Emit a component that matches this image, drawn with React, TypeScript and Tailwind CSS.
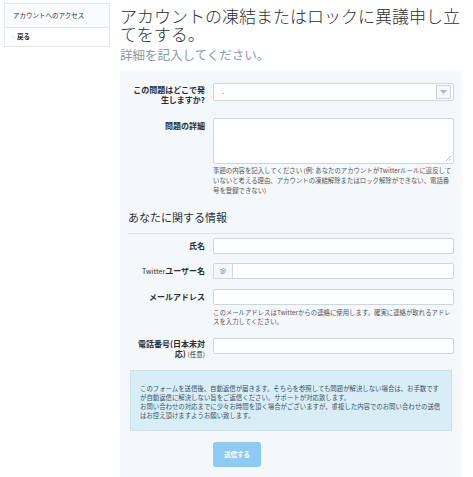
const jp = { fontFamily: '"Noto Sans CJK JP", "Noto Sans", sans-serif' }

function Label({ children }: { children: React.ReactNode }) {
  return (
    <div className="w-[77px] shrink-0 text-right text-[8px] font-bold leading-[10px] text-[#292f33]">
      {children}
    </div>
  )
}

function TextInput() {
  return <div className="h-[16px] flex-1 rounded-[2px] border border-[#ccd6dd] bg-white" />
}

export default function App() {
  return (
    <div className="flex min-h-[477px] bg-white" style={jp}>
      {/* Sidebar */}
      <aside className="ml-[4px] mt-[3px] h-[44px] w-[106px] shrink-0 border border-[#e1e8ed] bg-white">
        <div className="flex h-[24px] items-center border-b border-[#e1e8ed] bg-[#fafbfc] pl-[8px] text-[6.5px] text-[#292f33]">
          アカウントへのアクセス
        </div>
        <div className="flex h-[18px] items-center gap-[3px] pl-[7px] text-[6.5px] font-bold text-[#292f33]">
          <span className="text-[#ccd6dd]">‹</span>
          <span>戻る</span>
        </div>
      </aside>

      {/* Main */}
      <main className="ml-[10px] flex-1">
        <h1 className="mt-[7px] text-[17px] font-light leading-[18px] text-[#292f33]">
          アカウントの凍結またはロックに異議申し立てをする。
        </h1>
        <p className="mt-[4px] text-[12.5px] leading-[16px] text-[#8899a6]">詳細を記入してください。</p>

        <div className="mt-[8px] w-[342px] bg-[#f5f8fa] px-[8px] pb-[20px] pt-[12px]">
          {/* Where */}
          <div className="flex gap-[8px]">
            <div className="pt-[2px]">
              <Label>この問題はどこで発生しますか?</Label>
            </div>
            <div className="flex h-[18px] flex-1 items-center rounded-[2px] border border-[#ccd6dd] bg-white pl-[8px] pr-[2px]">
              <span className="flex-1 text-[7px] text-[#66757f]">-</span>
              <div className="flex h-[14px] w-[15px] items-center justify-center border border-[#ccd6dd] bg-[#f5f8fa]">
                <svg width="7" height="4" viewBox="0 0 7 4">
                  <path d="M0 0h7L3.5 4z" fill="#aab8c2" />
                </svg>
              </div>
            </div>
          </div>

          {/* Details */}
          <div className="mt-[13px] flex gap-[8px]">
            <div className="pt-[3px]">
              <Label>問題の詳細</Label>
            </div>
            <div className="flex-1">
              <div className="relative h-[46px] rounded-[2px] border border-[#ccd6dd] bg-white">
                <svg className="absolute bottom-[2px] right-[2px]" width="5" height="5" viewBox="0 0 5 5">
                  <path d="M5 0L0 5M5 2.5L2.5 5" stroke="#aab8c2" strokeWidth="0.8" />
                </svg>
              </div>
              <p className="mt-[2px] text-[6.4px] leading-[10px] text-[#555]">
                事題の内容を記入してください (例: あなたのアカウントがTwitterルールに違反していないと考える理由、アカウントの凍結解除またはロック解除ができない、電話番号を登録できない)
              </p>
            </div>
          </div>

          {/* Section heading */}
          <h2 className="mt-[14px] border-b border-[#e1e8ed] pb-[9px] text-[11px] leading-[14px] text-[#292f33]">
            あなたに関する情報
          </h2>

          {/* Name */}
          <div className="mt-[4px] flex items-center gap-[8px]">
            <Label>氏名</Label>
            <TextInput />
          </div>

          {/* Twitter */}
          <div className="mt-[9px] flex items-center gap-[8px]">
            <Label>
              <span className="text-[7px] font-normal">Twitter</span>ユーザー名
            </Label>
            <div className="flex h-[16px] flex-1 rounded-[2px] border border-[#ccd6dd] bg-white">
              <div className="flex w-[19px] items-center justify-center border-r border-[#ccd6dd] bg-[#f5f8fa] text-[6.5px] text-[#66757f]">
                @
              </div>
            </div>
          </div>

          {/* Email */}
          <div className="mt-[10px] flex gap-[8px]">
            <div className="pt-[3px]">
              <Label>メールアドレス</Label>
            </div>
            <div className="flex-1">
              <TextInput />
              <p className="mt-[3px] text-[6.4px] leading-[9px] text-[#555]">
                このメールアドレスはTwitterからの連絡に使用します。確実に連絡が取れるアドレスを入力してください。
              </p>
            </div>
          </div>

          {/* Phone */}
          <div className="mt-[12px] flex gap-[8px]">
            <div className="pt-[1px]">
              <Label>
                電話番号(日本未対
                <br />
                応) <span className="text-[6.5px] font-normal">(任意)</span>
              </Label>
            </div>
            <TextInput />
          </div>

          {/* Notice */}
          <div className="mx-[2px] mt-[11px] border border-[#c6e4f0] bg-[#d9edf7] px-[9px] pb-[10px] pt-[13px] text-[6.4px] leading-[9px] text-[#3b5566]">
            <p>
              このフォームを送信後、自動返信が届きます。そちらを参照しても問題が解決しない場合は、お手数ですが自動返信に解決しない旨をご返信ください。サポートが対応致します。
            </p>
            <p>
              お問い合わせの対応までに少々お時間を頂く場合がございますが、重複した内容でのお問い合わせの送信はお控え頂けますようお願い致します。
            </p>
          </div>

          {/* Submit */}
          <div className="mt-[11px] flex pl-[85px]">
            <button className="h-[25px] w-[48px] rounded-[3px] bg-[#8ecbf4] text-[6.5px] font-bold text-white">
              送信する
            </button>
          </div>
        </div>
      </main>
    </div>
  )
}
